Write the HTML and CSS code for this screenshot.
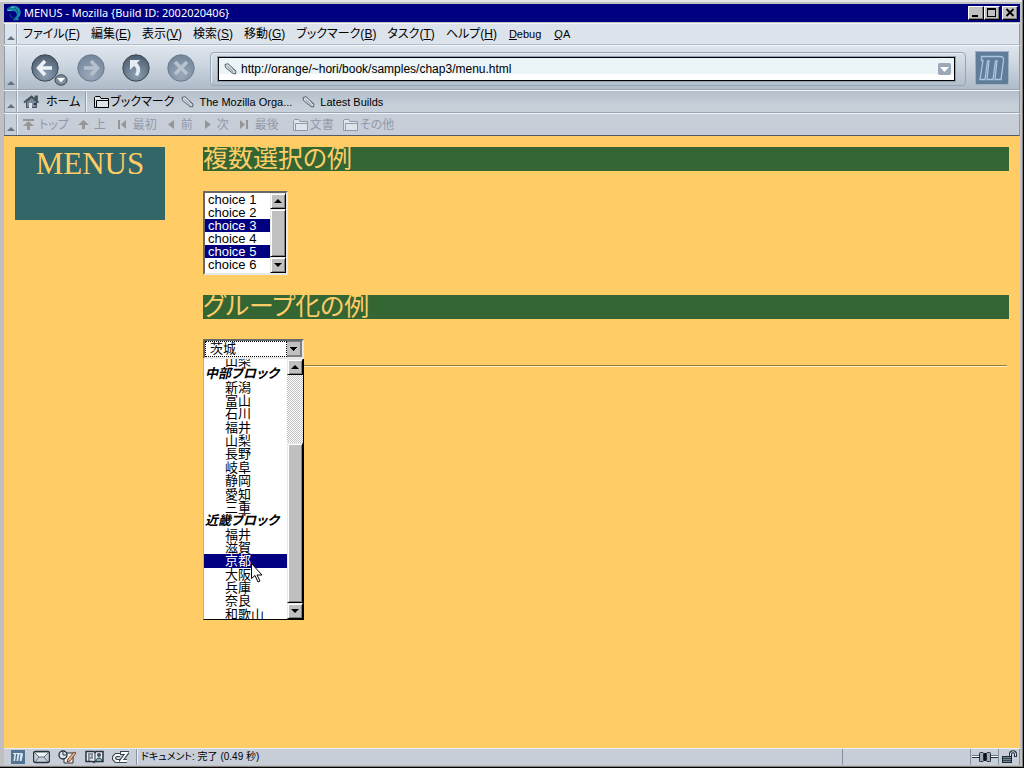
FILE: index.html
```html
<!DOCTYPE html>
<html lang="ja">
<head>
<meta charset="utf-8">
<title>MENUS - Mozilla {Build ID: 2002020406}</title>
<link rel="stylesheet" href="styles.css">
</head>
<body>
<svg width="0" height="0" class="defs" aria-hidden="true">
  <defs>
    <radialGradient id="ball" cx="50%" cy="75%" r="75%">
      <stop offset="0" stop-color="#8fa1b5"/><stop offset="1" stop-color="#4c5b6d"/>
    </radialGradient>
    <radialGradient id="ballOff" cx="50%" cy="75%" r="75%">
      <stop offset="0" stop-color="#9aa9ba"/><stop offset="1" stop-color="#74859a"/>
    </radialGradient>
    <symbol id="pen" viewBox="0 0 13 12">
      <path d="M1 1.500 4 .7 12 8 11.500 11 9 10.500 1.500 4.500Z" fill="#d5dce3" stroke="#56616e"/>
      <path d="M3.500 3.500 9.500 9M8 5l3 3" stroke="#8995a3" fill="none"/>
    </symbol>
    <symbol id="folder" viewBox="0 0 15 12">
      <path d="M.5 11.500v-10l1-1H6l1 2h7.500v9Z" fill="#dfe4ea" stroke="currentColor"/>
      <path d="M2.500 11V4.500H14" fill="none" stroke="currentColor"/>
    </symbol>
  </defs>
</svg>
<div class="window">
  <header class="titlebar">
    <svg class="app-icon" width="16" height="16" viewBox="0 0 16 16" aria-hidden="true">
      <path d="M1 4C3 1 8-.5 12 2c4 3 3 9 0 11l1 2-6 .5 2-3c3-1 2-5 0-6-2-.8-4 0-5-.5L1 6Z" fill="#1788a8"/>
      <path d="M2 4c4-3 9-1 10 4M4 9l1 3 5 2" fill="none" stroke="#085878"/>
      <path d="M5 2.500h3M2 5.500h3" stroke="#55b9d2"/>
    </svg>
    <h1 class="title">MENUS - Mozilla {Build ID: 2002020406}</h1>
    <div class="win-buttons">
      <button aria-label="最小化"><svg width="14" height="12"><path d="M3 8h6v2H3Z"/></svg></button>
      <button aria-label="最大化"><svg width="14" height="12"><path d="M2 1h9v9H2ZM3 3v6h7V3Z" fill-rule="evenodd"/></svg></button>
      <button class="close" aria-label="閉じる"><svg width="14" height="12"><path d="m3.500 2 7 7m0-7-7 7" stroke="#000" stroke-width="1.800"/></svg></button>
    </div>
  </header>

  <nav class="bar menubar">
    <button class="grip" aria-label="メニューバーをたたむ"></button>
    <div class="items">
      <button>ファイル(<u>F</u>)</button>
      <button>編集(<u>E</u>)</button>
      <button>表示(<u>V</u>)</button>
      <button>検索(<u>S</u>)</button>
      <button>移動(<u>G</u>)</button>
      <button>ブックマーク(<u>B</u>)</button>
      <button>タスク(<u>T</u>)</button>
      <button>ヘルプ(<u>H</u>)</button>
      <button class="latin"><u>D</u>ebug</button>
      <button class="latin"><u>Q</u>A</button>
    </div>
  </nav>

  <div class="bar navbar">
    <button class="grip" aria-label="ナビゲーションバーをたたむ"></button>
    <div class="nav-buttons">
      <button aria-label="戻る"><svg width="30" height="30" viewBox="0 0 30 30"><circle cx="15" cy="15" r="13.200" fill="url(#ball)" stroke="#3b4653"/><path d="M15 8 8.500 15 15 22M9 15h13" fill="none" stroke="#edf2f7" stroke-width="3.400"/></svg></button>
      <button class="history" aria-label="履歴"><svg width="14" height="12" viewBox="0 0 14 12"><ellipse cx="7" cy="6" rx="6" ry="5.200" fill="#7f8e9f" stroke="#3b4653"/><path d="M3 4h8L7 8.500Z" fill="#fff"/></svg></button>
      <button aria-label="進む"><svg width="30" height="30" viewBox="0 0 30 30"><circle cx="15" cy="15" r="13.200" fill="url(#ballOff)" stroke="#6b7b8e"/><path d="M15 8 21.500 15 15 22M21 15H8" fill="none" stroke="#b4c0ce" stroke-width="3.400"/></svg></button>
      <button aria-label="再読み込み"><svg width="30" height="30" viewBox="0 0 30 30"><circle cx="15" cy="15" r="13.200" fill="url(#ball)" stroke="#3b4653"/><path d="M9 7h10l-3 3c4 4 4 8 1 13l-3-1c2-4 2-7-1-9l-4 4Z" fill="#e4ebf3"/></svg></button>
      <button aria-label="中止"><svg width="30" height="30" viewBox="0 0 30 30"><circle cx="15" cy="15" r="13.200" fill="url(#ballOff)" stroke="#6b7b8e"/><path d="m9 9 12 12m0-12L9 21" fill="none" stroke="#b9c4d1" stroke-width="3.400"/></svg></button>
    </div>
    <div class="location">
      <div class="urlbox">
        <svg width="13" height="12" aria-hidden="true"><use href="#pen"/></svg>
        <input type="text" aria-label="アドレス" value="http://orange/~hori/book/samples/chap3/menu.html">
        <button class="url-drop" aria-label="履歴を表示"><svg width="13" height="12"><path d="M2 4h9L6.500 9Z" fill="#fff"/></svg></button>
      </div>
    </div>
    <a class="throbber" href="#" aria-label="Mozilla"><svg width="34" height="34" viewBox="0 0 34 34"><path d="M6.500 9.500V5.500H25c3 0 4 1.500 3.500 4L26 28.500H20L22 10H20.500L18 28.500H12L14 10H12.500L10 28.500H5L8 9.500Z" fill="none" stroke="#a9c7e4" stroke-width="1.300"/></svg></a>
  </div>

  <nav class="bar personal">
    <button class="grip" aria-label="個人ツールバーをたたむ"></button>
    <div class="items">
      <a href="#" class="home"><svg width="18" height="16" viewBox="0 0 18 16"><path d="M3.500 8v5.500h10V8L9 3.500Z" fill="#7c8c9c" stroke="#44515e"/><path d="m1 8.500 7.500-6 7 6M12.500 5V2.500H14V7" fill="none" stroke="#46545f" stroke-width="1.800"/><path d="M6 9h3v5H6Z" fill="#dbe4ec"/><path d="M11 9h2v2h-2Z" fill="#334"/></svg>ホーム</a>
      <a href="#" class="marks"><svg width="15" height="12"><use href="#folder"/></svg>ブックマーク</a>
      <a href="#" class="mark"><svg width="13" height="12"><use href="#pen"/></svg>The Mozilla Orga...</a>
      <a href="#" class="mark"><svg width="13" height="12"><use href="#pen"/></svg>Latest Builds</a>
    </div>
  </nav>

  <nav class="bar linkbar">
    <button class="grip" aria-label="サイトナビゲーションバーをたたむ"></button>
    <div class="items">
      <button disabled><svg width="11" height="11"><path d="M0 0h11v2H0ZM5.500 2 11 7H7v4H4V7H0Z"/></svg>トップ</button>
      <button disabled><svg width="11" height="11"><path d="M5.500 1 11 6H7v4H4V6H0Z"/></svg>上</button>
      <button disabled class="wide"><svg width="10" height="10"><path d="M1 0h2v9H1ZM9 0v9L4 4.500Z"/></svg>最初</button>
      <button disabled class="wide"><svg width="7" height="10"><path d="M6 0v9L0 4.500Z"/></svg>前</button>
      <button disabled class="wide"><svg width="7" height="10"><path d="M1 0v9l6-4.500Z"/></svg>次</button>
      <button disabled class="wide"><svg width="9" height="10"><path d="M0 0v9l5-4.500ZM6 0h2v9H6Z"/></svg>最後</button>
      <button disabled class="folder first"><svg width="15" height="12"><use href="#folder"/></svg>文書</button>
      <button disabled class="folder"><svg width="15" height="12"><use href="#folder"/></svg>その他</button>
    </div>
  </nav>

  <main class="page">
    <aside class="side">MENUS</aside>
    <div class="content">
      <h2>複数選択の例</h2>
      <div class="listbox">
        <select multiple size="6" aria-label="複数選択">
          <option>choice 1</option>
          <option>choice 2</option>
          <option selected>choice 3</option>
          <option>choice 4</option>
          <option selected>choice 5</option>
          <option>choice 6</option>
        </select>
        <div class="scroll" aria-hidden="true"><span class="arrow up"></span><span class="thumb"></span><span class="arrow down"></span></div>
      </div>
      <h2>グループ化の例</h2>
      <div class="combo">
        <select aria-label="都道府県"><option>茨城</option></select>
        <div class="popup">
          <ul role="listbox" aria-label="都道府県の一覧">
            <li role="option">山梨</li>
            <li class="group">中部ブロック</li>
            <li role="option">新潟</li>
            <li role="option">富山</li>
            <li role="option">石川</li>
            <li role="option">福井</li>
            <li role="option">山梨</li>
            <li role="option">長野</li>
            <li role="option">岐阜</li>
            <li role="option">静岡</li>
            <li role="option">愛知</li>
            <li role="option">三重</li>
            <li class="group">近畿ブロック</li>
            <li role="option">福井</li>
            <li role="option">滋賀</li>
            <li role="option" class="current" aria-selected="true">京都</li>
            <li role="option">大阪</li>
            <li role="option">兵庫</li>
            <li role="option">奈良</li>
            <li role="option">和歌山</li>
          </ul>
          <div class="scroll" aria-hidden="true"><span class="arrow up"></span><span class="track"></span><span class="thumb"></span><span class="arrow down"></span></div>
          <svg class="cursor" width="12" height="20" viewBox="0 0 12 20" aria-hidden="true"><path d="M.5.5v15l3.500-3 3 6.500 2-1-3-6H11Z" fill="#fff" stroke="#000"/></svg>
        </div>
      </div>
      <hr>
    </div>
  </main>

  <footer class="status">
    <div class="tasks">
      <button aria-label="Navigator"><svg width="14" height="14"><path d="M0 0h14v14H0Z" fill="#537394"/><path d="M2 4V3h9l1 1-1.500 7h-2l1-7H8.500L7 11H5.500L6.500 4H5L4 11H2.500l1-7Z" fill="#e1eefa"/></svg></button>
      <button aria-label="Mail"><svg width="17" height="14"><rect x=".5" y="1.500" width="16" height="11" rx="2" fill="#c3ced6" stroke="#28333d" stroke-width="1.400"/><path d="m2 3 4 4h5l4-4Z" fill="#eef3f6"/><path d="m2 3 4 4h5l4-4M2 12l4-5m9 5-4-5" fill="none" stroke="#63717d"/></svg></button>
      <button aria-label="Composer"><svg width="19" height="14"><path d="M6 3h9v10H6Z" fill="#f0f3f5" stroke="#28333d"/><circle cx="5" cy="5" r="4" fill="#dfe5ea" stroke="#28333d" stroke-width="1.400"/><path d="M5 2v3h3" fill="none" stroke="#28333d"/><path d="m10 9 6-7 2 1-6 8-3 1Z" fill="#e3ba86" stroke="#823e28"/></svg></button>
      <button aria-label="Address Book"><svg width="19" height="14"><path d="M1 1.500h8l1 1 1-1h7v10h-8l-1 1-1-1H1Z" fill="#e8edf1" stroke="#28333d" stroke-width="1.500"/><path d="M3 4h5M3 6h2m1 0h2M3 8h5M3 10h2M10 2v10" stroke="#28333d"/><circle cx="14" cy="5" r="2" fill="#425466"/><path d="M11 11c0-4 6-4 6 0" fill="#89b3c8" stroke="#28333d"/></svg></button>
      <button aria-label="ChatZilla"><svg width="17" height="14"><path d="M8 5H4L2 7v2l2 2h4M8 3h7L9 11h6" fill="none" stroke="#3a4650" stroke-width="4"/><path d="M8 5H4L2 7v2l2 2h3M9 3h6L9 11h6" fill="none" stroke="#fff" stroke-width="1.800"/></svg></button>
    </div>
    <output class="message">ドキュメント: 完了 (0.49 秒)</output>
    <div class="progress"></div>
    <div class="online"><svg width="26" height="14"><path d="M0 7.500h7m12 0h7M7 4h4m4 0h4M7 11h4m4 0h4" stroke="#26313b"/><path d="M0 6.500h7m12 0h7" stroke="#fff"/><path d="M0 5.500h7m12 0h7" stroke="#6b7884"/><rect x="7.500" y="2.500" width="4" height="9" rx="1" fill="#9aa9b8" stroke="#26313b"/><rect x="14.500" y="2.500" width="4" height="9" rx="1" fill="#9aa9b8" stroke="#26313b"/><path d="M13 3v8" stroke="#111" stroke-width="2"/></svg></div>
    <div class="lock"><svg width="17" height="14"><path d="M9.500 6V4c0-3 5-3 5 0v3" fill="none" stroke="#26313b" stroke-width="3"/><path d="M9.500 6V4c0-3 5-3 5 0v2" fill="none" stroke="#dbe2e8"/><rect x="1.500" y="6.500" width="9" height="6" fill="#728596" stroke="#1d2832"/><path d="M2 8.500h8m-8 2h8" stroke="#33424f"/></svg></div>
  </footer>
</div>
</body>
</html>
```
FILE: styles.css
```css
*, *::before, *::after { box-sizing: border-box; }

body {
  margin: 0;
  background: #c0c0c0;
  color: #000;
  font-family: "Liberation Sans", "Noto Sans CJK JP", sans-serif;
  font-size: 12px;
  line-height: 16px;
  font-feature-settings: "palt";
}

button, input, select {
  margin: 0;
  padding: 0;
  border: 0;
  border-radius: 0;
  background: none;
  color: inherit;
  font: inherit;
  font-feature-settings: inherit;
}

a { color: inherit; text-decoration: none; }
svg { display: block; flex: none; }
.defs { position: absolute; }

.window {
  display: flex;
  flex-direction: column;
  min-height: 100vh;
  padding: 4px 4px 3px;
  background: #c0c0c0;
  box-shadow: inset -1px -1px #000, inset -2px -2px #808080, inset 0 2px #e4e4e4;
}

/* Title bar */
.titlebar {
  display: flex;
  align-items: center;
  height: 18px;
  padding: 0 2px;
  background: #000080;
  color: #fff;
}
.title {
  flex: 1;
  margin: 0 0 0 2px;
  font-size: 11px;
  font-weight: normal;
  font-family: "Noto Sans", sans-serif;
}
.win-buttons { display: flex; }
.win-buttons button {
  width: 16px;
  height: 14px;
  border: 1px solid;
  border-color: #fff #000 #000 #fff;
  background: #c0c0c0;
  box-shadow: inset -1px -1px #808080;
}
.win-buttons .close { margin-left: 2px; }

/* Toolbars */
.bar {
  display: flex;
  border-top: 1px solid #f0f5fa;
  border-bottom: 1px solid #98a6b4;
  border-right: 1px solid #8d9cab;
}
.grip {
  position: relative;
  width: 13px;
  border-left: 1px solid #8d9cab;
  border-right: 1px solid #98a6b4;
  box-shadow: 1px 0 #edf2f7;
}
.grip::after {
  content: "";
  position: absolute;
  left: 2px;
  bottom: 4px;
  border: 4px solid transparent;
  border-top: 0;
  border-bottom-color: #66717f;
}
.items { display: flex; align-items: center; }
.latin, .mark { font-size: 11px; }

.menubar {
  height: 22px;
  margin-top: 1px;
  background: #dce3eb;
  border-bottom-color: #b2becb;
}
.menubar .items { gap: 11px; padding-left: 6px; }
.menubar .latin { padding: 0 1px; }

.navbar {
  height: 45px;
  align-items: stretch;
  background: linear-gradient(#dfe5ed, #d0d9e3 35%, #afbbc9);
}
.nav-buttons { display: flex; align-items: center; gap: 15px; padding-left: 13px; }
.nav-buttons .history { align-self: flex-end; margin: 0 -7px 3px -21px; }
.location {
  flex: 1;
  display: flex;
  margin: 6px 9px 3px 14px;
  padding: 4px 10px 4px 7px;
  border: 1px solid #97a6b5;
  border-radius: 4px;
  box-shadow: inset 1px 1px #e7edf3;
}
.urlbox {
  flex: 1;
  display: flex;
  align-items: center;
  gap: 4px;
  padding: 0 3px 0 5px;
  border: 1px solid #000;
  outline: 1px solid #8fa3b3;
  background: linear-gradient(#ebf4f6 75%, #fff 75%);
}
.urlbox input { flex: 1; min-width: 0; outline: 0; }
.url-drop { border-radius: 2px; background: #9ba8b8; }
.throbber {
  align-self: center;
  margin-right: 10px;
  border: 1px solid #9eb0c1;
  background: #607c98;
}
.throbber svg { margin: -1px; }

.personal {
  height: 23px;
  background: linear-gradient(#b4bfcb, #c7d0d9 70%);
}
.personal a { display: flex; align-items: center; height: 20px; }
.personal .home { gap: 5px; padding: 0 5px 0 6px; border-right: 1px solid #8d9cab; box-shadow: 1px 0 #edf2f7; }
.personal .marks { gap: 1px; padding: 0 7px 0 8px; }
.personal .mark { gap: 5px; padding-right: 10px; }

.linkbar {
  height: 23px;
  background: #c8ced8;
  border-bottom-color: #4e5a66;
  color: #9299aa;
}
.linkbar .items { gap: 9px; padding-left: 6px; }
.linkbar .items button { display: flex; align-items: center; gap: 5px; }
.linkbar .items svg { fill: #969696; }
.linkbar .items .wide { gap: 6px; padding-left: 2px; }
.linkbar .items .folder { gap: 2px; }
.linkbar .items .first { margin-left: 5px; }

/* Page */
.page {
  flex: 1;
  display: grid;
  grid-template-columns: 150px 1fr;
  align-items: start;
  gap: 38px;
  padding: 11px 11px 0;
  background: #ffcc66;
}
.side {
  height: 73px;
  background: #336666;
  color: #ffcc66;
  font-family: "Liberation Serif", serif;
  font-size: 31px;
  line-height: 34px;
  text-align: center;
}
h2 {
  margin: 0 0 20px;
  background: #336633;
  color: #ffcc66;
  font-family: "Liberation Serif", "Noto Sans CJK JP", serif;
  font-size: 25px;
  font-weight: normal;
  line-height: 24px;
}

.listbox {
  display: flex;
  width: 85px;
  height: 84px;
  margin-bottom: 20px;
  border: 2px solid;
  border-color: #696969 #e8e8e8 #e8e8e8 #696969;
  background: #fff;
}
.listbox select { flex: 1; min-width: 0; overflow: hidden; outline: 0; font-size: 13px; }
.listbox option {
  display: flex;
  align-items: center;
  height: 13px;
  min-height: 13px;
  padding: 0 0 0 3px;
  line-height: 13px;
  color: #000;
}
.listbox option:checked { background: linear-gradient(#000080, #000080); color: #fff; }

.scroll { display: flex; flex-direction: column; width: 16px; background: #c0c0c0; }
.arrow, .thumb {
  border: 1px solid;
  border-color: #e8e8e8 #000 #000 #e8e8e8;
  background: #c0c0c0;
  box-shadow: inset 1px 1px #fff, inset -1px -1px #808080;
}
.arrow { display: flex; align-items: center; justify-content: center; height: 16px; }
.arrow::after { content: ""; border: 4px solid transparent; }
.up::after { border-top: 0; border-bottom-color: #000; }
.down::after { border-bottom: 0; border-top-color: #000; }
.thumb { flex: 1; }
.track { height: 68px; background: repeating-conic-gradient(#fff 0 25%, #c0c0c0 0 50%) 0 0 / 2px 2px; }

.combo { position: relative; width: 101px; }
.combo select {
  display: block;
  width: 100%;
  height: 20px;
  padding-left: 5px;
  border: 2px solid;
  border-color: #696969 #e8e8e8 #e8e8e8 #696969;
  appearance: none;
  outline: 0;
  font-size: 13px;
  line-height: 16px;
  background:
    linear-gradient(#000, #000) right 5px top 6px / 7px 1px no-repeat,
    linear-gradient(#000, #000) right 6px top 7px / 5px 1px no-repeat,
    linear-gradient(#000, #000) right 7px top 8px / 3px 1px no-repeat,
    linear-gradient(#000, #000) right 8px top 9px / 1px 1px no-repeat,
    linear-gradient(#c0c0c0, #c0c0c0) right 2px top 1px / 13px 13px no-repeat,
    linear-gradient(#808080, #808080) right / 15px 100% no-repeat,
    #fff;
}
.combo::before {
  content: "";
  position: absolute;
  top: 2px;
  left: 2px;
  width: 82px;
  height: 16px;
  border: 1px dotted #000;
  pointer-events: none;
}
.popup {
  position: absolute;
  top: 20px;
  left: 0;
  display: flex;
  width: 101px;
  height: 261px;
  border: 1px solid;
  border-color: transparent #000 #000 #b0b0b0;
  border-top: 0;
  background: #fff;
}
.popup ul {
  flex: 1;
  display: grid;
  grid-auto-rows: 1fr;
  height: 267px;
  margin: -5px 0 0;
  padding: 0;
  list-style: none;
  font-size: 13px;
  line-height: 13px;
  clip-path: inset(5px 0 2px);
}
.popup li { padding-left: 21px; white-space: nowrap; }
.popup .group { padding-left: 1px; font-weight: bold; font-style: italic; }
.popup .current { background: #000080; color: #fff; }
.cursor { position: absolute; left: 47px; top: 204px; }

hr {
  height: 2px;
  margin: 6px 2px 0 0;
  border: 0;
  border-top: 1px solid #997a3d;
  border-bottom: 1px solid #fff0c8;
}

/* Status bar */
.status {
  display: flex;
  height: 17px;
  border-top: 1px solid #e6edf3;
  background: #c7ced8;
}
.status > div, .message { display: flex; align-items: center; }
.tasks { gap: 8px; padding: 0 7px; border-right: 1px solid #8293a3; }
.message { flex: 1; padding-left: 3px; font-size: 10px; border-left: 1px solid #edf2f7; }
.progress { width: 129px; border-left: 1px solid #8293a3; border-right: 1px solid #8293a3; }
.online { width: 28px; padding-left: 1px; border-right: 1px solid #8293a3; }
.lock { width: 21px; padding-left: 2px; border-right: 1px solid #8293a3; }
```
